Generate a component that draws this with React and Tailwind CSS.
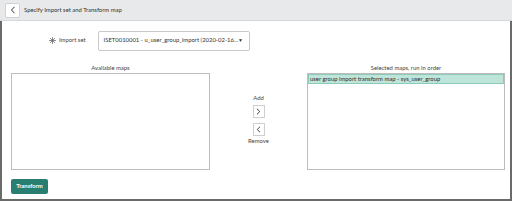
import React from 'react';

const font = { fontFamily: 'Lato, "Open Sans", sans-serif' };

function Asterisk() {
  return (
    <svg width="7" height="7" viewBox="0 0 14 14" className="text-[#6b6b6b]">
      <g stroke="currentColor" strokeWidth="1.6" strokeLinecap="round">
        <line x1="7" y1="1" x2="7" y2="13" />
        <line x1="1" y1="7" x2="13" y2="7" />
        <line x1="2.8" y1="2.8" x2="11.2" y2="11.2" />
        <line x1="11.2" y1="2.8" x2="2.8" y2="11.2" />
      </g>
    </svg>
  );
}

export default function App() {
  return (
    <div className="w-[512px] h-[201px] bg-white flex flex-col text-[#2e2e2e]" style={font}>
      {/* Header */}
      <div className="h-[21px] shrink-0 flex items-center pl-[5px] bg-[#e7e9eb] border-b border-[#d5d8db]">
        <button className="w-[15px] h-[15px] bg-white border border-[#cfd2d5] rounded-[2px] flex items-center justify-center">
          <svg width="6" height="8" viewBox="0 0 6 8">
            <path d="M4.5 0.8 L1.5 4 L4.5 7.2" fill="none" stroke="#333" strokeWidth="1" />
          </svg>
        </button>
        <span className="ml-[4px] text-[5.9px] text-[#333]">Specify Import set and Transform map</span>
      </div>

      {/* Body */}
      <div className="flex-1 flex flex-col border-l-2 border-r-2 border-b-2 border-[#6a6a6a] pl-[9px] pr-[2px]">
        {/* Import set row */}
        <div className="mt-[9px] h-[21px] flex items-center">
          <div className="ml-[38px] flex items-center">
            <Asterisk />
            <span className="ml-[3px] text-[5.9px] text-[#444]">Import set</span>
          </div>
          <div className="ml-[12px] w-[152px] h-[20px] border border-[#c9c9c9] rounded-[2px] flex items-center pl-[5px] pr-[6px]">
            <span className="text-[5.9px] text-[#333] whitespace-nowrap flex-1">ISET0010001 - u_user_group_import (2020-02-16...</span>
            <span className="text-[5px] text-[#333]">▼</span>
          </div>
        </div>

        {/* Lists */}
        <div className="mt-[12px] flex">
          <div className="w-[199px] flex flex-col">
            <div className="h-[10px] text-center text-[5.9px] text-[#444] leading-[10px]">Available maps</div>
            <div className="h-[97px] border border-[#bdbdbd]" />
          </div>

          <div className="w-[97px] flex flex-col items-center pt-[31px]">
            <div className="text-[5.9px] text-[#444] leading-[8px]">Add</div>
            <button className="mt-[3px] w-[12px] h-[13px] bg-white border border-[#cfcfcf] flex items-center justify-center">
              <svg width="5" height="7" viewBox="0 0 5 7">
                <path d="M1 0.8 L3.8 3.5 L1 6.2" fill="none" stroke="#333" strokeWidth="0.9" />
              </svg>
            </button>
            <button className="mt-[5px] w-[12px] h-[13px] bg-white border border-[#cfcfcf] flex items-center justify-center">
              <svg width="5" height="7" viewBox="0 0 5 7">
                <path d="M4 0.8 L1.2 3.5 L4 6.2" fill="none" stroke="#333" strokeWidth="0.9" />
              </svg>
            </button>
            <div className="mt-[1px] text-[5.9px] text-[#444] leading-[8px]">Remove</div>
          </div>

          <div className="w-[198px] flex flex-col">
            <div className="h-[10px] text-center text-[5.9px] text-[#444] leading-[10px]">Selected maps, run in order</div>
            <div className="h-[97px] border border-[#bdbdbd]">
              <div className="h-[10px] bg-[#bfe4da] border border-[#8ccab9] flex items-center pl-[1px] text-[5.9px] text-[#2b2b2b] whitespace-nowrap">
                user group import transform map - sys_user_group
              </div>
            </div>
          </div>
        </div>

        {/* Transform */}
        <div className="mt-[9px]">
          <button className="w-[37px] h-[15px] bg-[#287f71] rounded-[2px] text-white text-[5.9px] font-bold flex items-center justify-center">
            Transform
          </button>
        </div>
      </div>
    </div>
  );
}
